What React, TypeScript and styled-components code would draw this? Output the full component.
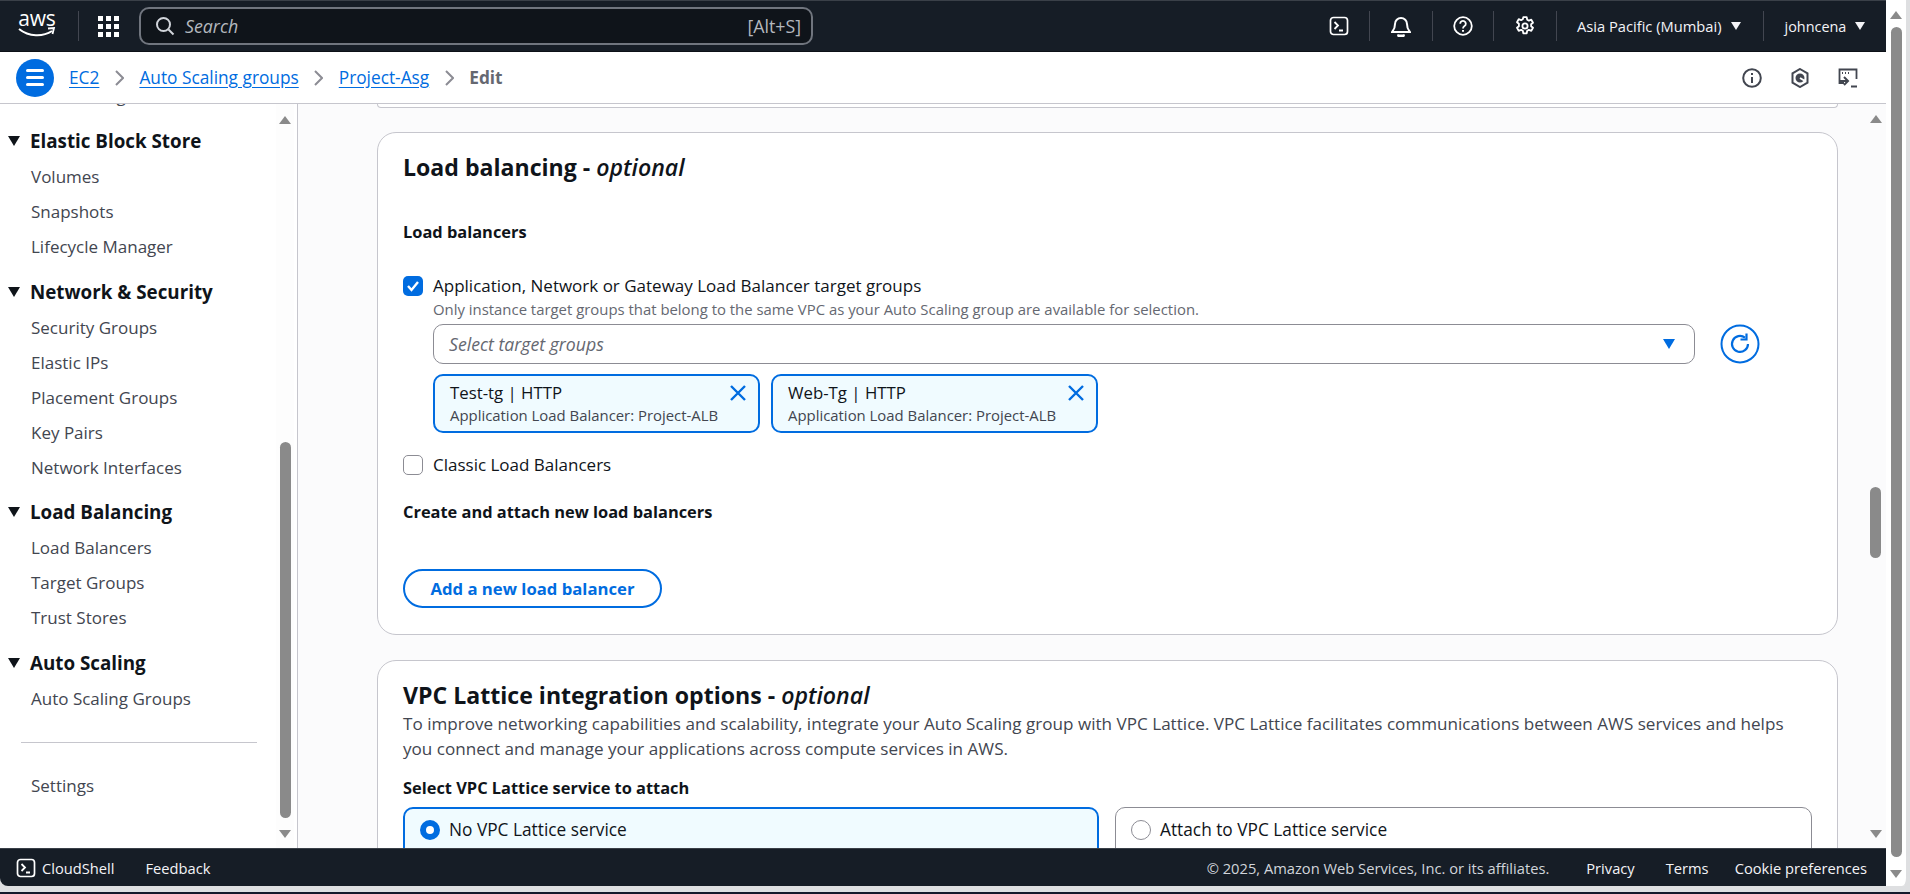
import React from "react";
import styled, {createGlobalStyle} from "styled-components";

const GlobalStyle = createGlobalStyle`
  * { box-sizing: border-box; }
  html, body {
    margin: 0;
    padding: 0;
    height: 894px;
    overflow: hidden;
    background: #1c1f2e;
    font-family: "Open Sans", "Liberation Sans", sans-serif;
    color: #0f141a;
  }
`;

const BLUE = "#006ce0";

const Screen = styled.div`
  width: 1910px;
  height: 894px;
  display: flex;
  flex-direction: column;
  background: #14182a;
`;

const Browser = styled.div`
  height: 892px;
  padding-bottom: 6px;
  background: #dedfe1;
  display: flex;
  align-items: stretch;
`;

const Console = styled.div`
  width: 1887px;
  display: flex;
  flex-direction: column;
  border-bottom-left-radius: 8px;
  overflow: hidden;
`;

const PageScroll = styled.div`
  flex: 1;
  background: #fff;
  border-right: 4px solid #dedfe1;
  border-bottom-right-radius: 8px;
  display: flex;
  flex-direction: column;
  align-items: center;
  padding: 11px 4px 8px 4px;
`;

const ArrowUp = styled.div`
  width: 0;
  height: 0;
  flex: none;
  border-left: 6px solid transparent;
  border-right: 6px solid transparent;
  border-bottom: 8px solid #8a8a8a;
`;

const ArrowDown = styled(ArrowUp)`
  border-bottom: 0;
  border-top: 8px solid #8a8a8a;
`;

const ScrollThumb = styled.div<{$top: number; $height: number}>`
  width: 11px;
  height: ${p => p.$height}px;
  margin-top: ${p => p.$top}px;
  flex: none;
  border-radius: 6px;
  background: #8a8a8a;
`;

const ScrollSpacer = styled.div`
  flex: 1;
`;

/* top nav */
const TopNav = styled.header`
  height: 52px;
  flex: none;
  background: #161d26;
  border-top: 1px solid #3a4048;
  border-bottom: 1px solid #0d1117;
  color: #fff;
  display: flex;
  align-items: center;
  padding: 0 0 0 18px;
`;

const AwsLogo = styled.div`
  width: 38px;
  height: 36px;
  display: flex;
  flex-direction: column;
  align-items: center;
  font-size: 21px;
  line-height: 21px;
  letter-spacing: -.2px;
  & svg { margin-top: -2px; }
`;

const NavSep = styled.div<{$left: number}>`
  width: 1px;
  height: 30px;
  flex: none;
  margin-left: ${p => p.$left}px;
  background: #424650;
`;

const GridIcon = styled.div`
  margin-left: 19px;
  width: 21px;
  height: 21px;
  display: grid;
  grid-template-columns: repeat(3, 5px);
  grid-auto-rows: 5px;
  gap: 3px;
  & span { background: #fff; }
`;

const SearchBox = styled.div`
  margin-left: 20px;
  width: 674px;
  height: 38px;
  flex: none;
  background: #0f141a;
  border: 2px solid #70757e;
  border-radius: 10px;
  display: flex;
  align-items: center;
  padding: 0 10px 0 14px;
  color: #b4b8be;
  font-size: 17.8px;
`;

const SearchHint = styled.span`
  margin-left: 10px;
  flex: 1;
  font-style: italic;
`;

const NavIcon = styled.div<{$left: number}>`
  margin-left: ${p => p.$left}px;
  display: flex;
  flex: none;
`;

const NavMenu = styled.div<{$left: number; $size?: number}>`
  margin-left: ${p => p.$left}px;
  display: flex;
  align-items: center;
  gap: 9px;
  font-size: ${p => p.$size ?? 14.4}px;
  flex: none;
  color: #f3f3f7;
`;

const SmallCaret = styled.span`
  width: 0;
  height: 0;
  border-left: 5px solid transparent;
  border-right: 5px solid transparent;
  border-top: 8px solid #f3f3f7;
`;

/* breadcrumb bar */
const SubBar = styled.div`
  height: 52px;
  flex: none;
  background: #fff;
  border-bottom: 1px solid #c6c6cd;
  display: flex;
  align-items: center;
  padding-left: 16px;
`;

const MenuButton = styled.div`
  width: 38px;
  height: 38px;
  border-radius: 50%;
  background: ${BLUE};
  margin-right: 15px;
  flex: none;
  display: flex;
  flex-direction: column;
  justify-content: center;
  align-items: center;
  gap: 4px;
  & span { width: 18px; height: 3px; border-radius: 2px; background: #fff; }
`;

const Crumb = styled.a`
  color: ${BLUE};
  font-size: 17.3px;
  text-decoration: underline;
  text-underline-offset: 3px;
`;

const CrumbCurrent = styled.span`
  font-size: 17.3px;
  font-weight: 700;
  color: #656871;
`;

const CrumbChevron = styled.svg`
  margin: 0 15.5px;
  flex: none;
`;

const SubTools = styled.div`
  margin-left: auto;
  margin-right: 28px;
  display: flex;
  align-items: center;
  gap: 29px;
`;

/* body */
const Body = styled.div`
  flex: 1;
  min-height: 0;
  display: flex;
`;

const Sidebar = styled.nav`
  width: 298px;
  flex: none;
  background: #fff;
  border-right: 1px solid #c6c6cd;
  display: flex;
  overflow: hidden;
`;

const SideList = styled.div`
  flex: 1;
  min-width: 0;
`;

const ClippedRow = styled.div`
  height: 3px;
  margin-bottom: 16px;
  padding-left: 31px;
  overflow: hidden;
  font-size: 17px;
  color: #424650;
  & span { display: block; margin-top: -19px; line-height: 22px; }
`;

const SideGroup = styled.div`
  margin-bottom: 9.6px;
`;

const SideHead = styled.div`
  height: 36px;
  display: flex;
  align-items: center;
  padding-left: 8px;
  font-size: 18.8px;
  font-weight: 700;
  color: #0f141a;
`;

const SideCaret = styled.span`
  width: 0;
  height: 0;
  margin-right: 10px;
  border-left: 6.5px solid transparent;
  border-right: 6.5px solid transparent;
  border-top: 10px solid #0f141a;
`;

const SideItem = styled.div`
  height: 35px;
  display: flex;
  align-items: center;
  padding-left: 31px;
  font-size: 17px;
  color: #424650;
`;

const SideRule = styled.hr`
  margin: 26px 0 25px 21px;
  width: 236px;
  height: 1px;
  border: 0;
  background: #c6c6cd;
`;

const SideScroll = styled.div`
  width: 18px;
  margin-right: 3px;
  background: #fdfdfd;
  flex: none;
  display: flex;
  flex-direction: column;
  align-items: center;
  padding: 12px 0 10px;
`;

const Main = styled.main`
  flex: 1;
  min-width: 0;
  background: #fbfbfc;
  display: flex;
`;

const Content = styled.div`
  flex: 1;
  min-width: 0;
  padding: 0 27px 0 79px;
  overflow: hidden;
`;

const CardStub = styled.div`
  height: 4px;
  background: #fff;
  border: 1px solid #c6c6cd;
  border-top: 0;
  border-radius: 0 0 16px 16px;
  margin-bottom: 24px;
`;

const Card = styled.section`
  background: #fff;
  border: 1px solid #c6c6cd;
  border-radius: 19px;
  padding: 18px 25px 0;
  margin-bottom: 25px;
`;

const LoadCard = styled(Card)`
  height: 503px;
`;

const LatticeCard = styled(Card)`
  height: 300px;
`;

const CardTitle = styled.h2`
  margin: 0;
  font-size: 23.1px;
  line-height: 32px;
  font-weight: 700;
  & em { font-weight: 600; }
`;

const FieldLabel = styled.div<{$top: number; $bottom: number}>`
  margin: ${p => p.$top}px 0 ${p => p.$bottom}px;
  font-size: 16.4px;
  line-height: 22px;
  font-weight: 700;
`;

const CheckRow = styled.div<{$top?: number}>`
  display: flex;
  align-items: center;
  height: 20px;
  margin-top: ${p => p.$top ?? 0}px;
  gap: 10px;
  font-size: 17px;
  line-height: 18px;
`;

const CheckBox = styled.span<{$on?: boolean}>`
  width: 20px;
  height: 20px;
  flex: none;
  border-radius: 5px;
  background: ${p => (p.$on ? BLUE : "#fff")};
  border: ${p => (p.$on ? "0" : "1.5px solid #8c8c94")};
  display: flex;
  align-items: center;
  justify-content: center;
`;

const Indented = styled.div`
  padding-left: 30px;
`;

const Constraint = styled.div`
  margin-top: 3px;
  font-size: 14.9px;
  line-height: 20px;
  color: #656871;
`;

const SelectRow = styled.div`
  display: flex;
  align-items: center;
  margin-top: 5px;
`;

const SelectBox = styled.div`
  width: 1262px;
  height: 40px;
  flex: none;
  border: 1px solid #8c8c94;
  border-radius: 10px;
  display: flex;
  align-items: center;
  justify-content: space-between;
  padding: 0 19px 0 15px;
  font-size: 17.7px;
  font-style: italic;
  color: #656871;
`;

const SelectCaret = styled.span`
  width: 0;
  height: 0;
  border-left: 6.5px solid transparent;
  border-right: 6.5px solid transparent;
  border-top: 10px solid ${BLUE};
`;

const RefreshButton = styled.div`
  margin-left: 25px;
  display: flex;
`;

const Tokens = styled.div`
  display: flex;
  gap: 11px;
  margin-top: 10px;
`;

const Token = styled.div`
  width: 327px;
  height: 59px;
  border: 2px solid ${BLUE};
  border-radius: 10px;
  background: #f0fbff;
  padding: 6px 11px 0 15px;
  display: flex;
  justify-content: space-between;
`;

const TokenName = styled.div`
  font-size: 16.8px;
  line-height: 22px;
`;

const TokenDetail = styled.div`
  font-size: 14.9px;
  line-height: 20px;
  margin-top: 1px;
  color: #424650;
`;

const TokenClose = styled.svg`
  margin-top: 3px;
  flex: none;
`;

const AddButton = styled.button`
  display: block;
  width: 259px;
  height: 39px;
  padding: 0;
  background: #fff;
  border: 2px solid ${BLUE};
  border-radius: 20px;
  color: ${BLUE};
  font-family: inherit;
  font-size: 16.7px;
  font-weight: 700;
`;

const Paragraph = styled.p`
  margin: 0;
  font-size: 17.1px;
  line-height: 25px;
  color: #424650;
  max-width: 1400px;
`;

const RadioCards = styled.div`
  display: grid;
  grid-template-columns: 696px 697px;
  gap: 16px;
`;

const RadioCard = styled.div<{$on?: boolean}>`
  height: 80px;
  border: ${p => (p.$on ? `2px solid ${BLUE}` : "1px solid #8c8c94")};
  background: ${p => (p.$on ? "#f0fbff" : "#fff")};
  border-radius: 10px;
  padding: ${p => (p.$on ? "11px 15px" : "12px 15px")};
  display: flex;
  align-items: flex-start;
  gap: 9px;
  font-size: 17.3px;
  line-height: 20px;
`;

const RadioDot = styled.span<{$on?: boolean}>`
  width: 20px;
  height: 20px;
  flex: none;
  border-radius: 50%;
  background: #fff;
  border: ${p => (p.$on ? `6px solid ${BLUE}` : "1.5px solid #8c8c94")};
`;

const MainScroll = styled.div`
  width: 21px;
  flex: none;
  display: flex;
  flex-direction: column;
  align-items: center;
  padding: 11px 0 10px;
`;

/* footer */
const Footer = styled.footer`
  height: 38px;
  flex: none;
  background: #161d26;
  border-top: 1px solid #3a4048;
  color: #f3f3f7;
  display: flex;
  align-items: center;
  padding: 0 19px 0 16px;
  font-size: 14.7px;
`;

const FootLeft = styled.span<{$left: number}>`
  margin-left: ${p => p.$left}px;
`;

const Copyright = styled.span`
  margin-left: auto;
  color: #d1d5db;
`;

const ShellIcon = ({size, stroke = "#fff"}: {size: number; stroke?: string}) => (
    <svg width={size} height={size} viewBox="0 0 20 20" fill="none" stroke={stroke} strokeWidth="1.7" style={{flex: "none"}}>
        <rect x="1.5" y="1.5" width="17" height="17" rx="3"/>
        <path d="M5.5 6l3.5 3.5-3.5 3.5M10 14.5h4" strokeWidth="1.8"/>
    </svg>
);

const Chevron = () => (
    <CrumbChevron width="9" height="16" viewBox="0 0 9 16" fill="none" stroke="#8c8c94" strokeWidth="2">
        <path d="M1 1l7 7-7 7"/>
    </CrumbChevron>
);

const CloseIcon = () => (
    <TokenClose width="18" height="16" viewBox="0 0 18 16" fill="none" stroke={BLUE} strokeWidth="2.4">
        <path d="M2 1l14 14M16 1L2 15"/>
    </TokenClose>
);

const sideGroups = [
    {title: "Elastic Block Store", items: ["Volumes", "Snapshots", "Lifecycle Manager"]},
    {title: "Network & Security", items: ["Security Groups", "Elastic IPs", "Placement Groups", "Key Pairs", "Network Interfaces"]},
    {title: "Load Balancing", items: ["Load Balancers", "Target Groups", "Trust Stores"]},
    {title: "Auto Scaling", items: ["Auto Scaling Groups"]},
];

const tokens = ["Test-tg | HTTP", "Web-Tg | HTTP"];

const App: React.FC = () => {
    return (
        <Screen>
            <GlobalStyle/>
            <Browser>
                <Console>
                    <TopNav>
                        <AwsLogo>
                            aws
                            <svg width="38" height="11" viewBox="0 0 38 11" fill="none">
                                <path d="M1 2c10 8 24 8 33 2" stroke="#fff" strokeWidth="2"/>
                                <path d="M30 1.5l6-.5-1.5 6" stroke="#fff" strokeWidth="1.8"/>
                            </svg>
                        </AwsLogo>
                        <NavSep $left={22}/>
                        <GridIcon>
                            {Array.from({length: 9}).map((_, i) => <span key={i}/>)}
                        </GridIcon>
                        <SearchBox>
                            <svg width="20" height="20" viewBox="0 0 20 20" fill="none" stroke="#d1d5db" strokeWidth="2">
                                <circle cx="8.5" cy="8.5" r="6.5"/>
                                <path d="M13.5 13.5l5 5"/>
                            </svg>
                            <SearchHint>Search</SearchHint>
                            <span>[Alt+S]</span>
                        </SearchBox>
                        <NavIcon $left={516}><ShellIcon size={20}/></NavIcon>
                        <NavSep $left={20}/>
                        <NavIcon $left={21}>
                            <svg width="20" height="22" viewBox="0 0 20 22" fill="none" stroke="#fff" strokeWidth="2">
                                <path d="M4 9a6 6 0 0 1 12 0c0 5 1.500 6 3 8H1c1.500-2 3-3 3-8z"/>
                                <path d="M7 19.500a3 2.500 0 0 0 6 0" fill="#fff"/>
                            </svg>
                        </NavIcon>
                        <NavSep $left={21}/>
                        <NavIcon $left={20}>
                            <svg width="20" height="20" viewBox="0 0 20 20" fill="none" stroke="#fff" strokeWidth="1.8">
                                <circle cx="10" cy="10" r="8.800"/>
                                <path d="M7.200 7.800a2.800 2.800 0 1 1 4.300 2.300c-1 .7-1.500 1.200-1.500 2.400"/>
                                <path d="M10 14v1.800" strokeWidth="2"/>
                            </svg>
                        </NavIcon>
                        <NavSep $left={20}/>
                        <NavIcon $left={21}>
                            <svg width="20" height="20" viewBox="0 0 20 20" fill="none" stroke="#fff" strokeWidth="1.8">
                                <circle cx="10" cy="10" r="2.600"/>
                                <path d="M8.300 1.200h3.400l.5 2.500 1.700.9 2.400-.9 1.700 3-1.900 1.600v1.900l1.900 1.600-1.700 3-2.400-.9-1.700.9-.5 2.500H8.300l-.5-2.500-1.700-.9-2.400.9-1.700-3 1.900-1.600V7.800L2 6.200l1.700-3 2.400.9 1.700-.9z" strokeLinejoin="round"/>
                            </svg>
                        </NavIcon>
                        <NavSep $left={21}/>
                        <NavMenu $left={20} $size={14.7}>Asia Pacific (Mumbai) <SmallCaret/></NavMenu>
                        <NavSep $left={22}/>
                        <NavMenu $left={21}>johncena <SmallCaret/></NavMenu>
                    </TopNav>
                    <SubBar>
                        <MenuButton><span/><span/><span/></MenuButton>
                        <Crumb>EC2</Crumb>
                        <Chevron/>
                        <Crumb>Auto Scaling groups</Crumb>
                        <Chevron/>
                        <Crumb>Project-Asg</Crumb>
                        <Chevron/>
                        <CrumbCurrent>Edit</CrumbCurrent>
                        <SubTools>
                            <svg width="20" height="20" viewBox="0 0 20 20" fill="none" stroke="#424650" strokeWidth="2">
                                <circle cx="10" cy="10" r="8.800"/>
                                <path d="M10 9v6M10 5v2"/>
                            </svg>
                            <svg width="18" height="20" viewBox="0 0 18 20" fill="none" stroke="#424650" strokeWidth="2">
                                <path d="M9 1l7.500 4.300v9.400L9 19l-7.500-4.300V5.300z"/>
                                <circle cx="9" cy="10" r="3.500" fill="#424650"/>
                                <path d="M9 10l5 3" stroke="#fff"/>
                            </svg>
                            <svg width="20" height="20" viewBox="0 0 20 20" fill="none" stroke="#424650" strokeWidth="1.800">
                                <path d="M6 15H1.500V1.500h17V11"/>
                                <path d="M4 5h1M7 5h1M10 5h1" strokeWidth="2"/>
                                <path d="M6 9l4 4-4 4M1 13h8M13 18.500h6" strokeWidth="2"/>
                            </svg>
                        </SubTools>
                    </SubBar>
                    <Body>
                        <Sidebar>
                            <SideList>
                                <ClippedRow><span>AMI Catalog</span></ClippedRow>
                                {sideGroups.map(g => (
                                    <SideGroup key={g.title}>
                                        <SideHead><SideCaret/>{g.title}</SideHead>
                                        {g.items.map(item => <SideItem key={item}>{item}</SideItem>)}
                                    </SideGroup>
                                ))}
                                <SideRule/>
                                <SideItem>Settings</SideItem>
                            </SideList>
                            <SideScroll>
                                <ArrowUp/>
                                <ScrollThumb $top={318} $height={376}/>
                                <ScrollSpacer/>
                                <ArrowDown/>
                            </SideScroll>
                        </Sidebar>
                        <Main>
                            <Content>
                                <CardStub/>
                                <LoadCard>
                                    <CardTitle>Load balancing - <em>optional</em></CardTitle>
                                    <FieldLabel $top={38} $bottom={33}>Load balancers</FieldLabel>
                                    <CheckRow>
                                        <CheckBox $on>
                                            <svg width="14" height="12" viewBox="0 0 14 12" fill="none" stroke="#fff" strokeWidth="2.400">
                                                <path d="M2 6l3.500 4L12 2"/>
                                            </svg>
                                        </CheckBox>
                                        Application, Network or Gateway Load Balancer target groups
                                    </CheckRow>
                                    <Indented>
                                        <Constraint>Only instance target groups that belong to the same VPC as your Auto Scaling group are available for selection.</Constraint>
                                        <SelectRow>
                                            <SelectBox>Select target groups<SelectCaret/></SelectBox>
                                            <RefreshButton>
                                                <svg width="40" height="40" viewBox="0 0 40 40" fill="none" stroke={BLUE} strokeWidth="2">
                                                    <circle cx="20" cy="20" r="18.500"/>
                                                    <path d="M28 20a8 8 0 1 1-3-6.300" strokeWidth="2.200"/>
                                                    <path d="M26.500 9.500v6h-6" strokeWidth="2.200"/>
                                                </svg>
                                            </RefreshButton>
                                        </SelectRow>
                                        <Tokens>
                                            {tokens.map(t => (
                                                <Token key={t}>
                                                    <div>
                                                        <TokenName>{t}</TokenName>
                                                        <TokenDetail>Application Load Balancer: Project-ALB</TokenDetail>
                                                    </div>
                                                    <CloseIcon/>
                                                </Token>
                                            ))}
                                        </Tokens>
                                    </Indented>
                                    <CheckRow $top={22}>
                                        <CheckBox/>
                                        Classic Load Balancers
                                    </CheckRow>
                                    <FieldLabel $top={26} $bottom={46}>Create and attach new load balancers</FieldLabel>
                                    <AddButton>Add a new load balancer</AddButton>
                                </LoadCard>
                                <LatticeCard>
                                    <CardTitle>VPC Lattice integration options - <em>optional</em></CardTitle>
                                    <Paragraph>To improve networking capabilities and scalability, integrate your Auto Scaling group with VPC Lattice. VPC Lattice facilitates communications between AWS services and helps you connect and manage your applications across compute services in AWS.</Paragraph>
                                    <FieldLabel $top={16} $bottom={8}>Select VPC Lattice service to attach</FieldLabel>
                                    <RadioCards>
                                        <RadioCard $on><RadioDot $on/>No VPC Lattice service</RadioCard>
                                        <RadioCard><RadioDot/>Attach to VPC Lattice service</RadioCard>
                                    </RadioCards>
                                </LatticeCard>
                            </Content>
                            <MainScroll>
                                <ArrowUp/>
                                <ScrollThumb $top={364} $height={71}/>
                                <ScrollSpacer/>
                                <ArrowDown/>
                            </MainScroll>
                        </Main>
                    </Body>
                    <Footer>
                        <ShellIcon size={20}/>
                        <FootLeft $left={6}>CloudShell</FootLeft>
                        <FootLeft $left={31}>Feedback</FootLeft>
                        <Copyright>© 2025, Amazon Web Services, Inc. or its affiliates.</Copyright>
                        <FootLeft $left={37}>Privacy</FootLeft>
                        <FootLeft $left={31}>Terms</FootLeft>
                        <FootLeft $left={26}>Cookie preferences</FootLeft>
                    </Footer>
                </Console>
                <PageScroll>
                    <ArrowUp/>
                    <ScrollThumb $top={8} $height={830}/>
                    <ScrollSpacer/>
                    <ArrowDown/>
                </PageScroll>
            </Browser>
        </Screen>
    );
};

export default App;
